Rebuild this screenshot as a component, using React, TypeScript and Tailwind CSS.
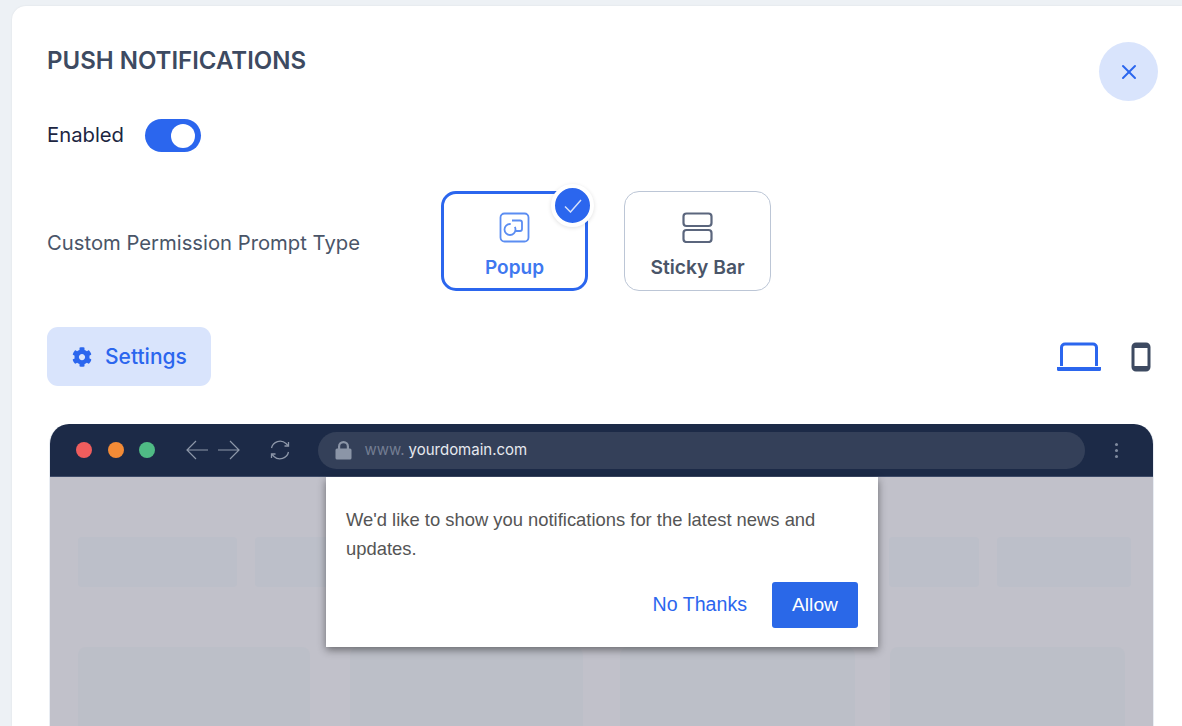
import React from "react";
import { X } from "lucide-react";
import { FaCog } from "react-icons/fa";

const Toggle = () => (
  <div className="flex h-[33px] w-[56px] items-center justify-end rounded-full bg-[#2b66ee] pr-[6px]">
    <span className="h-[24px] w-[24px] rounded-full bg-white" />
  </div>
);

const PopupIcon = () => (
  <svg width="31" height="31" viewBox="0 0 31 31" fill="none" stroke="#5b8df2" strokeWidth="1.8">
    <rect x="1.5" y="1.5" width="28" height="28" rx="4" />
    <circle cx="11" cy="17.5" r="5.5" strokeDasharray="26 5" />
    <path d="M13 8.5h8a2 2 0 0 1 2 2V17a2 2 0 0 1-2 2h-4" />
  </svg>
);

const StickyIcon = () => (
  <svg width="31" height="31" viewBox="0 0 31 31" fill="none" stroke="#5b667d" strokeWidth="2.2">
    <rect x="1.5" y="1.5" width="28" height="12.5" rx="3" />
    <rect x="1.5" y="18" width="28" height="12" rx="3" />
  </svg>
);

const LaptopIcon = () => (
  <svg width="46" height="30" viewBox="0 0 46 30" fill="none">
    <path d="M5.5 24V5.5a3.5 3.5 0 0 1 3.5-3.5h28a3.5 3.5 0 0 1 3.5 3.5V24" stroke="#2b66ee" strokeWidth="3" />
    <path d="M1 25h44v2.5a1.5 1.5 0 0 1-1.5 1.5h-41A1.5 1.5 0 0 1 1 27.5Z" fill="#2b66ee" />
  </svg>
);

const PhoneIcon = () => (
  <svg width="20" height="30" viewBox="0 0 20 30" fill="none">
    <rect x="2" y="2" width="16" height="26" rx="3" stroke="#3d4a61" strokeWidth="3" />
    <rect x="2" y="2" width="16" height="4" fill="#3d4a61" />
    <rect x="2" y="24" width="16" height="4" fill="#3d4a61" />
  </svg>
);

const NavIcons = () => (
  <div className="ml-[30px] flex items-center text-[#8d97a9]">
    <svg width="24" height="22" viewBox="0 0 24 22" fill="none" stroke="currentColor" strokeWidth="1.2">
      <path d="M23 11H2M11 2l-9 9 9 9" />
    </svg>
    <svg className="ml-[8px]" width="24" height="22" viewBox="0 0 24 22" fill="none" stroke="currentColor" strokeWidth="1.2">
      <path d="M1 11h21M13 2l9 9-9 9" />
    </svg>
    <svg className="ml-[28px]" width="22" height="22" viewBox="0 0 22 22" fill="none" stroke="currentColor" strokeWidth="1.3">
      <path d="M2.5 9A8.8 8.8 0 0 1 17 4.5l2 2" />
      <path d="M19.5 13A8.8 8.8 0 0 1 5 17.5l-2-2" />
      <path d="M19.5 3v4h-4M2.5 19v-4h4" />
    </svg>
  </div>
);

const Dots = () => (
  <div className="ml-[30px] flex flex-col gap-[3px]">
    <span className="h-[3px] w-[3px] rounded-full bg-[#7f8a9e]" />
    <span className="h-[3px] w-[3px] rounded-full bg-[#7f8a9e]" />
    <span className="h-[3px] w-[3px] rounded-full bg-[#7f8a9e]" />
  </div>
);

export default function App() {
  return (
    <div
      className="h-[726px] w-[1182px] overflow-hidden bg-[#edf1f5] pl-[12px] pt-[6px] text-[#1f2a44]"
      style={{ fontFamily: "Inter, 'Liberation Sans', sans-serif" }}
    >
      <div className="relative h-[720px] rounded-tl-[14px] bg-white pl-[35px] pr-[29px] pt-[40px] shadow-[0_0_2px_rgba(0,0,0,0.08)]">
        <button className="absolute right-[24px] top-[36px] flex h-[59px] w-[59px] items-center justify-center rounded-full bg-[#d9e4fc] text-[#2b66ee]">
          <X size={24} strokeWidth={2} />
        </button>

        <h1 className="text-[24px] font-semibold leading-[30px] text-[#3d4a61]">PUSH NOTIFICATIONS</h1>

        <div className="mt-[43px] flex items-center gap-[21px]">
          <span className="pb-[2px] text-[20.25px] leading-[31px] text-[#1c2541]">Enabled</span>
          <Toggle />
        </div>

        <div className="mt-[39px] flex items-center">
          <span className="w-[394px] pt-[4px] text-[20.25px] text-[#4a5568]">Custom Permission Prompt Type</span>
          <div className="flex gap-[36px]">
            <div className="relative flex h-[100px] w-[147px] flex-col items-center rounded-[15px] border-[3px] border-[#2b66ee] pt-[18px]">
              <PopupIcon />
              <span className="mt-[12px] text-[19px] font-semibold leading-[26px] text-[#3f78f0]">Popup</span>
              <span className="absolute right-[-9px] top-[-10px] flex h-[43px] w-[43px] items-center justify-center rounded-full border-[4px] border-white bg-[#2b66ee] shadow-[0_1px_4px_rgba(0,0,0,0.12)]">
                <svg width="18" height="14" viewBox="0 0 18 14" fill="none" stroke="#d5e0fa" strokeWidth="1.5">
                  <path d="M1 7.5 6.5 13 17 1" />
                </svg>
              </span>
            </div>
            <div className="flex h-[100px] w-[147px] flex-col items-center rounded-[15px] border-[1.5px] border-[#bcc6d6] pt-[20px]">
              <StickyIcon />
              <span className="mt-[11px] text-[19.25px] font-semibold leading-[26px] text-[#4a5568]">Sticky Bar</span>
            </div>
          </div>
        </div>

        <div className="mt-[36px] flex items-center justify-between">
          <button className="flex h-[59px] w-[164px] items-center gap-[13px] rounded-[11px] bg-[#d9e4fc] pl-[25px] text-[21px] font-medium text-[#2b66ee]">
            <FaCog size={20} />
            Settings
          </button>
          <div className="flex items-center gap-[29px] pr-[2px]">
            <LaptopIcon />
            <PhoneIcon />
          </div>
        </div>

        <div className="ml-[2px] mt-[38px] h-[302px] w-[1105px] overflow-hidden rounded-t-[20px] border-x border-[#e9edf3]">
          <div className="flex h-[53px] items-center border-b border-[#3d4a68] bg-[#1c2a47] pl-[26px]">
            <span className="h-[16px] w-[16px] rounded-full bg-[#ef5d5d]" />
            <span className="ml-[15.5px] h-[16px] w-[16px] rounded-full bg-[#f38b36]" />
            <span className="ml-[15.5px] h-[16px] w-[16px] rounded-full bg-[#4fbb85]" />
            <NavIcons />
            <div className="ml-[26.5px] flex h-[37px] w-[767px] items-center rounded-full bg-[#344059] pl-[17px] text-[15px]">
              <svg width="17" height="19" viewBox="0 0 17 19" fill="#8b95a7">
                <path d="M3 8V5.5a5.5 5.5 0 0 1 11 0V8h-2.2V5.5a3.3 3.3 0 0 0-6.6 0V8Z" />
                <rect x="0.5" y="7.5" width="16" height="11" rx="1.5" />
              </svg>
              <span className="ml-[13px] pt-[1px] text-[#737d92]">www.</span>
              <span className="ml-[4px] pt-[1px] text-[#e6e9ef]">yourdomain.com</span>
            </div>
            <Dots />
          </div>

          <div className="relative h-[249px] bg-[#c1c1ca] pl-[28px] pt-[60px]">
            <div className="flex gap-[18px]">
              <div className="h-[50px] w-[159px] rounded-[4px] bg-[#bcbfc9]" />
              <div className="h-[50px] w-[616px] rounded-[4px] bg-[#bcbfc9]" />
              <div className="h-[50px] w-[90px] rounded-[4px] bg-[#bcbfc9]" />
              <div className="h-[50px] w-[134px] rounded-[4px] bg-[#bcbfc9]" />
            </div>
            <div className="mt-[60px] flex">
              <div className="h-[90px] w-[232px] rounded-t-[8px] bg-[#bcbfc8]" />
              <div className="ml-[40px] h-[90px] w-[233px] rounded-t-[8px] bg-[#bcbfc8]" />
              <div className="ml-[37px] h-[90px] w-[235px] rounded-t-[8px] bg-[#bcbfc8]" />
              <div className="ml-[35px] h-[90px] w-[235px] rounded-t-[8px] bg-[#bcbfc8]" />
            </div>

            <div
              className="absolute left-[276px] top-0 h-[170px] w-[552px] bg-white px-[20px] pt-[29px] shadow-[0_3px_8px_rgba(0,0,0,0.45)]"
              style={{ fontFamily: "'Liberation Sans', Arial, sans-serif" }}
            >
              <p className="text-[18.4px] leading-[28.5px] text-[#555555]">
                We'd like to show you notifications for the latest news and updates.
              </p>
              <div className="mt-[19px] flex items-center justify-end gap-[25px]">
                <span className="text-[19.6px] text-[#2b66ee]">No Thanks</span>
                <span className="flex h-[46px] w-[86px] items-center justify-center rounded-[3px] bg-[#2a68e8] text-[19.2px] text-white">
                  Allow
                </span>
              </div>
            </div>
          </div>
        </div>
      </div>
    </div>
  );
}
